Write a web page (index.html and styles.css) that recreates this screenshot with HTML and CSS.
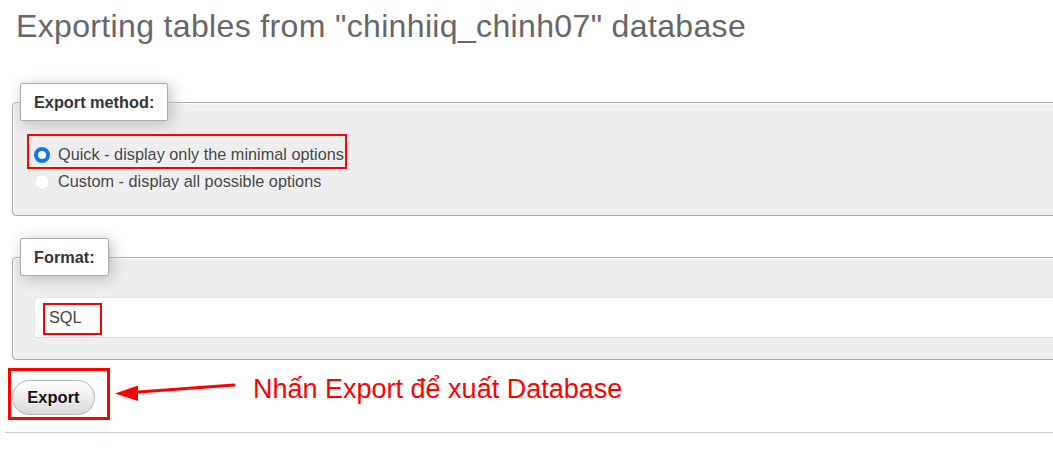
FILE: index.html
```html
<!DOCTYPE html>
<html lang="en">
<head>
<meta charset="utf-8">
<title>Export</title>
<link rel="stylesheet" href="styles.css">
</head>
<body>
<div class="page">
  <h2 class="title">Exporting tables from "chinhiiq_chinh07" database</h2>

  <fieldset class="box">
    <legend class="box-legend">Export method:</legend>
    <div class="radios">
      <div class="radio-row">
        <span class="radio radio-on"></span>
        <span class="radio-label">Quick - display only the minimal options</span>
      </div>
      <div class="radio-row">
        <span class="radio"></span>
        <span class="radio-label">Custom - display all possible options</span>
      </div>
      <div class="mark mark-quick"></div>
    </div>
  </fieldset>

  <fieldset class="box box-format">
    <legend class="box-legend">Format:</legend>
    <div class="select">
      <span class="select-text">SQL</span>
      <div class="mark mark-sql"></div>
    </div>
  </fieldset>

  <div class="actions">
    <div class="btn-mark">
      <button class="btn" type="button">Export</button>
    </div>
    <svg class="arrow" width="127" height="28" viewBox="0 0 127 28">
      <line x1="22" y1="16.3" x2="121" y2="9" stroke="#f00" stroke-width="3" stroke-linecap="round"/>
      <polygon points="2,17.5 25,9.5 25,25" fill="#f00"/>
    </svg>
    <span class="note">Nhấn Export để xuất Database</span>
  </div>

  <div class="rule"></div>
</div>
</body>
</html>
```

FILE: styles.css
```css
html, body {
  margin: 0;
  padding: 0;
  overflow: hidden;
  background: #fff;
}

body {
  font-family: "Liberation Sans", Arial, sans-serif;
  color: #444;
}

.page {
  width: 1053px;
  height: 452px;
  overflow: hidden;
}

.title {
  margin: 6px 0 0 16px;
  font-size: 32px;
  line-height: 40px;
  letter-spacing: 0.35px;
  font-weight: normal;
  color: #666;
  white-space: nowrap;
}

.box {
  margin: 37px -6px 0 12px;
  padding: 0 0 20px 7px;
  border: 1px solid #aaa;
  border-radius: 4px;
  background: #eee;
  box-shadow: inset 1px 1px 2px #fff;
}

.box-format {
  margin-top: 22px;
  padding-bottom: 21px;
}

.box-legend {
  padding: 9px 13px;
  font-size: 16.3px;
  line-height: 18px;
  font-weight: bold;
  color: #333;
  background: #fff;
  border: 1px solid #aaa;
  border-radius: 2px;
  box-shadow: 3px 3px 15px #bbb;
}

.radios {
  position: relative;
  margin: 20px 0 0 14px;
}

.radio-row {
  display: flex;
  align-items: center;
  height: 27px;
  gap: 8px;
}

.radio {
  box-sizing: border-box;
  width: 16px;
  height: 16px;
  border-radius: 50%;
  background: #fff;
  border: 1px solid #e2e2e2;
  flex: none;
}

.radio-on {
  border: 4.5px solid #0b77f2;
  background: #fff;
}

.radio-label {
  font-size: 16.3px;
  color: #444;
  text-shadow: 1px 1px 2px #fff;
}

.mark {
  position: absolute;
  border: 2px solid #f00;
  box-sizing: border-box;
}

.mark-quick {
  left: -7px;
  top: -7px;
  width: 320px;
  height: 35px;
}

.select {
  position: relative;
  box-sizing: border-box;
  height: 41px;
  margin: 21px 0 0 14px;
  padding-left: 14px;
  display: flex;
  align-items: center;
  background: #fff;
  border: 1px solid #e3e3e8;
  border-bottom-color: #dcdce8;
  border-radius: 4px;
}

.select-text {
  font-size: 16.3px;
  color: #444;
}

.mark-sql {
  left: 8px;
  top: 5px;
  width: 59px;
  height: 32px;
}

.actions {
  display: flex;
  align-items: flex-start;
  margin: 8px 0 0 8px;
}

.btn-mark {
  border: 3px solid #f00;
  padding: 9px 12px 2px 1px;
}

.btn {
  display: block;
  box-sizing: border-box;
  width: 83px;
  height: 35px;
  margin: 0;
  padding: 0;
  font-family: "Liberation Sans", Arial, sans-serif;
  font-size: 16.5px;
  font-weight: bold;
  color: #111;
  background: linear-gradient(#ffffff, #d9d9d9);
  border: 1px solid #b3b3b3;
  border-radius: 18px;
  text-shadow: 0 1px 0 #fff;
}

.arrow {
  display: block;
  margin: 8px 0 0 3px;
  flex: none;
}

.note {
  margin: 6px 0 0 13px;
  font-size: 27px;
  line-height: 31px;
  color: #f00;
  white-space: nowrap;
}

.rule {
  height: 1px;
  margin: 12px 0 0 5px;
  background: #ccc;
}
```
